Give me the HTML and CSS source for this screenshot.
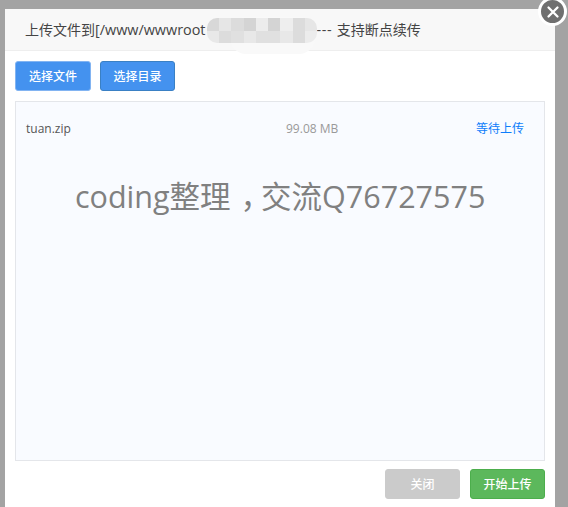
FILE: index.html
```html
<!DOCTYPE html>
<html lang="zh">
<head>
<meta charset="utf-8">
<title>上传文件</title>
<link rel="stylesheet" href="styles.css">
</head>
<body>
<div class="modal">
  <button class="close" aria-label="关闭">
    <svg viewBox="0 0 14 14" width="14" height="14"><path d="M2.5 2.5L11.5 11.5M11.5 2.5L2.5 11.5" stroke="#fff" stroke-width="2.3" stroke-linecap="round"/></svg>
  </button>
  <header class="title">上传文件到<span class="latin">[/www/wwwroot</span><span class="hidden-path"></span><span class="latin dash">---</span> 支持断点续传</header>
  <div class="smudge" aria-hidden="true"></div>
  <div class="mosaic" aria-hidden="true">
    <i class="c"></i><i class="b"></i><i class="a"></i><i class="g"></i><i class="e"></i><i class="g"></i><i class="d"></i><i class="a"></i><i class="b"></i>
    <i class="h"></i><i class="a"></i><i class="j"></i><i class="h"></i><i class="j"></i><i class="j"></i><i class="h"></i><i class="a"></i><i class="e"></i>
  </div>
  <div class="body">
    <div class="actions">
      <button class="btn blue focused">选择文件</button>
      <button class="btn blue">选择目录</button>
    </div>
    <div class="list">
      <div class="row">
        <span class="name">tuan.zip</span>
        <span class="size">99.08 MB</span>
        <span class="status">等待上传</span>
      </div>
      <div class="watermark">coding整理<span class="comma">，</span>交流Q76727575</div>
    </div>
    <div class="footer">
      <button class="btn gray">关闭</button>
      <button class="btn green">开始上传</button>
    </div>
  </div>
</div>
</body>
</html>
```
FILE: styles.css
```css
* { box-sizing: border-box; }
html, body { margin: 0; height: 100%; overflow: hidden; }
body {
  background: #a3a3a3;
  font-family: "Open Sans", "Noto Sans CJK SC", sans-serif;
  padding: 9px 13px 0 5px;
}
.modal {
  position: relative;
  width: 550px;
  height: 498px;
  background: #fff;
}
.close {
  position: absolute;
  top: -12px;
  right: -12px;
  width: 29px;
  height: 29px;
  border-radius: 50%;
  border: 3px solid #fff;
  background: #6f6f6f;
  padding: 0;
  display: flex;
  align-items: center;
  justify-content: center;
  z-index: 3;
}
.title {
  height: 42px;
  padding-left: 20px;
  line-height: 41px;
  font-size: 14px;
  color: #444;
  background: #f8f8f8;
  border-bottom: 1px solid #eee;
  white-space: nowrap;
}
.latin { font-size: 14.4px; }
.dash { letter-spacing: .6px; margin-right: 1px; }
.hidden-path { display: inline-block; width: 111px; }
.smudge {
  position: absolute;
  left: 225px;
  top: 8px;
  width: 85px;
  height: 37px;
  border-radius: 16px;
  background: #f9f9f9;
  z-index: 1;
}
.mosaic {
  position: absolute;
  left: 202px;
  top: 9px;
  width: 110px;
  height: 25px;
  display: grid;
  grid-template-columns: repeat(9, 1fr);
  grid-auto-rows: 1fr;
  border-radius: 10px;
  overflow: hidden;
  filter: blur(.5px);
  z-index: 2;
}
.mosaic .a { background: #dcdcdc; }
.mosaic .b { background: #e6e6e6; }
.mosaic .c { background: #d8d8d8; }
.mosaic .d { background: #eeeeee; }
.mosaic .e { background: #ececec; }
.mosaic .g { background: #d4d4d4; }
.mosaic .h { background: #e8e8e8; }
.mosaic .j { background: #e0e0e0; }
.body { padding: 10px 10px 0; }
.actions { display: flex; gap: 9px; height: 30px; }
.btn {
  width: 75px;
  height: 30px;
  border-radius: 3px;
  border: 1px solid transparent;
  padding: 0;
  color: #fff;
  font-family: inherit;
  font-size: 12px;
  font-weight: 500;
}
.blue { background: #4492ef; border-color: #3a80c4; }
.focused { width: 76px; border-color: #82b4f2; }
.gray { background: #cbcbcb; border-color: #cbcbcb; }
.green { background: #5cb85c; border-color: #4cae4c; }
.list {
  position: relative;
  margin-top: 10px;
  height: 360px;
  background: #f9fbff;
  border: 1px solid #e4e6ea;
}
.row {
  display: flex;
  align-items: center;
  height: 52px;
  padding-left: 10px;
  font-size: 12px;
}
.name { width: 260px; color: #555; }
.size { width: 190px; color: #999; }
.status { color: #0d7dfb; }
.watermark {
  margin-top: 18px;
  padding-left: 59px;
  font-size: 30.5px;
  line-height: 48px;
  color: #808080;
  white-space: nowrap;
}
.comma { padding-left: 10px; letter-spacing: -10px; }
.footer { display: flex; justify-content: flex-end; gap: 10px; margin-top: 8px; }
```
